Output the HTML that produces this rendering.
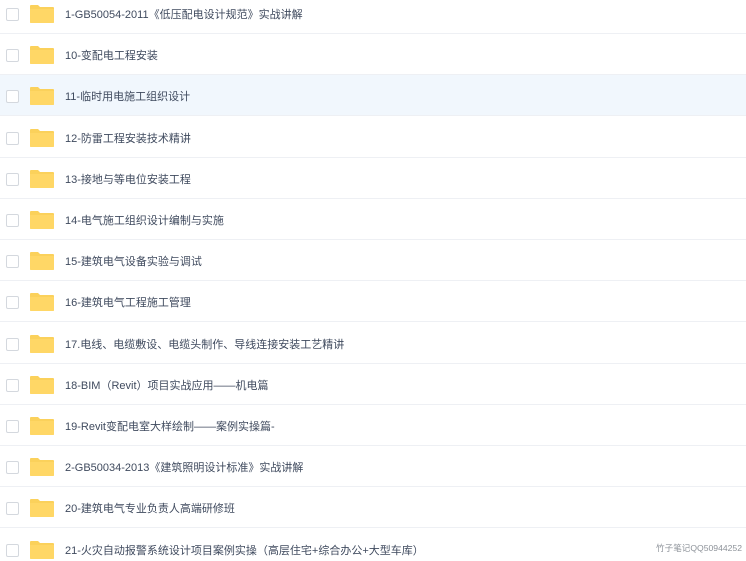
<!DOCTYPE html>
<html><head><meta charset="utf-8"><style>
html,body{margin:0;padding:0;width:746px;height:561px;overflow:hidden;background:#fff;}
body{position:relative;font-family:"Liberation Sans","Noto Sans CJK SC",sans-serif;}
.r{position:absolute;left:0;width:746px;height:41px;border-bottom:1px solid #eef0f4;box-sizing:border-box;}
.r.h{background:#f1f7fd;}
.cb{position:absolute;left:6px;top:15px;width:11px;height:11px;border:1px solid #d4d8de;border-radius:2px;background:#fff;}
.f{position:absolute;left:30px;top:11px;width:24px;height:19px;}
.t{position:absolute;left:65px;top:14px;font-size:11px;color:#3f4a5e;line-height:16px;white-space:nowrap;}
.wm{position:absolute;left:656px;top:542px;font-size:8.6px;color:#8d9299;white-space:nowrap;}
</style></head><body>
<div class="r" style="top:-7px"><div class="cb"></div><svg class="f" viewBox="0 0 24 19"><path d="M0 2a1 1 0 0 1 1-1h7l2 2h13a1 1 0 0 1 1 1v14a1 1 0 0 1-1 1H1a1 1 0 0 1-1-1z" fill="#fbd15b"/><path d="M0 5h24v13a1 1 0 0 1-1 1H1a1 1 0 0 1-1-1z" fill="#ffd766"/></svg><div class="t">1-GB50054-2011《低压配电设计规范》实战讲解</div></div>
<div class="r" style="top:34.2px"><div class="cb"></div><svg class="f" viewBox="0 0 24 19"><path d="M0 2a1 1 0 0 1 1-1h7l2 2h13a1 1 0 0 1 1 1v14a1 1 0 0 1-1 1H1a1 1 0 0 1-1-1z" fill="#fbd15b"/><path d="M0 5h24v13a1 1 0 0 1-1 1H1a1 1 0 0 1-1-1z" fill="#ffd766"/></svg><div class="t">10-变配电工程安装</div></div>
<div class="r h" style="top:75.4px"><div class="cb"></div><svg class="f" viewBox="0 0 24 19"><path d="M0 2a1 1 0 0 1 1-1h7l2 2h13a1 1 0 0 1 1 1v14a1 1 0 0 1-1 1H1a1 1 0 0 1-1-1z" fill="#fbd15b"/><path d="M0 5h24v13a1 1 0 0 1-1 1H1a1 1 0 0 1-1-1z" fill="#ffd766"/></svg><div class="t">11-临时用电施工组织设计</div></div>
<div class="r" style="top:116.6px"><div class="cb"></div><svg class="f" viewBox="0 0 24 19"><path d="M0 2a1 1 0 0 1 1-1h7l2 2h13a1 1 0 0 1 1 1v14a1 1 0 0 1-1 1H1a1 1 0 0 1-1-1z" fill="#fbd15b"/><path d="M0 5h24v13a1 1 0 0 1-1 1H1a1 1 0 0 1-1-1z" fill="#ffd766"/></svg><div class="t">12-防雷工程安装技术精讲</div></div>
<div class="r" style="top:157.8px"><div class="cb"></div><svg class="f" viewBox="0 0 24 19"><path d="M0 2a1 1 0 0 1 1-1h7l2 2h13a1 1 0 0 1 1 1v14a1 1 0 0 1-1 1H1a1 1 0 0 1-1-1z" fill="#fbd15b"/><path d="M0 5h24v13a1 1 0 0 1-1 1H1a1 1 0 0 1-1-1z" fill="#ffd766"/></svg><div class="t">13-接地与等电位安装工程</div></div>
<div class="r" style="top:199px"><div class="cb"></div><svg class="f" viewBox="0 0 24 19"><path d="M0 2a1 1 0 0 1 1-1h7l2 2h13a1 1 0 0 1 1 1v14a1 1 0 0 1-1 1H1a1 1 0 0 1-1-1z" fill="#fbd15b"/><path d="M0 5h24v13a1 1 0 0 1-1 1H1a1 1 0 0 1-1-1z" fill="#ffd766"/></svg><div class="t">14-电气施工组织设计编制与实施</div></div>
<div class="r" style="top:240.2px"><div class="cb"></div><svg class="f" viewBox="0 0 24 19"><path d="M0 2a1 1 0 0 1 1-1h7l2 2h13a1 1 0 0 1 1 1v14a1 1 0 0 1-1 1H1a1 1 0 0 1-1-1z" fill="#fbd15b"/><path d="M0 5h24v13a1 1 0 0 1-1 1H1a1 1 0 0 1-1-1z" fill="#ffd766"/></svg><div class="t">15-建筑电气设备实验与调试</div></div>
<div class="r" style="top:281.4px"><div class="cb"></div><svg class="f" viewBox="0 0 24 19"><path d="M0 2a1 1 0 0 1 1-1h7l2 2h13a1 1 0 0 1 1 1v14a1 1 0 0 1-1 1H1a1 1 0 0 1-1-1z" fill="#fbd15b"/><path d="M0 5h24v13a1 1 0 0 1-1 1H1a1 1 0 0 1-1-1z" fill="#ffd766"/></svg><div class="t">16-建筑电气工程施工管理</div></div>
<div class="r" style="top:322.6px"><div class="cb"></div><svg class="f" viewBox="0 0 24 19"><path d="M0 2a1 1 0 0 1 1-1h7l2 2h13a1 1 0 0 1 1 1v14a1 1 0 0 1-1 1H1a1 1 0 0 1-1-1z" fill="#fbd15b"/><path d="M0 5h24v13a1 1 0 0 1-1 1H1a1 1 0 0 1-1-1z" fill="#ffd766"/></svg><div class="t">17.电线、电缆敷设、电缆头制作、导线连接安装工艺精讲</div></div>
<div class="r" style="top:363.8px"><div class="cb"></div><svg class="f" viewBox="0 0 24 19"><path d="M0 2a1 1 0 0 1 1-1h7l2 2h13a1 1 0 0 1 1 1v14a1 1 0 0 1-1 1H1a1 1 0 0 1-1-1z" fill="#fbd15b"/><path d="M0 5h24v13a1 1 0 0 1-1 1H1a1 1 0 0 1-1-1z" fill="#ffd766"/></svg><div class="t">18-BIM（Revit）项目实战应用——机电篇</div></div>
<div class="r" style="top:405px"><div class="cb"></div><svg class="f" viewBox="0 0 24 19"><path d="M0 2a1 1 0 0 1 1-1h7l2 2h13a1 1 0 0 1 1 1v14a1 1 0 0 1-1 1H1a1 1 0 0 1-1-1z" fill="#fbd15b"/><path d="M0 5h24v13a1 1 0 0 1-1 1H1a1 1 0 0 1-1-1z" fill="#ffd766"/></svg><div class="t">19-Revit变配电室大样绘制——案例实操篇-</div></div>
<div class="r" style="top:446.2px"><div class="cb"></div><svg class="f" viewBox="0 0 24 19"><path d="M0 2a1 1 0 0 1 1-1h7l2 2h13a1 1 0 0 1 1 1v14a1 1 0 0 1-1 1H1a1 1 0 0 1-1-1z" fill="#fbd15b"/><path d="M0 5h24v13a1 1 0 0 1-1 1H1a1 1 0 0 1-1-1z" fill="#ffd766"/></svg><div class="t">2-GB50034-2013《建筑照明设计标准》实战讲解</div></div>
<div class="r" style="top:487.4px"><div class="cb"></div><svg class="f" viewBox="0 0 24 19"><path d="M0 2a1 1 0 0 1 1-1h7l2 2h13a1 1 0 0 1 1 1v14a1 1 0 0 1-1 1H1a1 1 0 0 1-1-1z" fill="#fbd15b"/><path d="M0 5h24v13a1 1 0 0 1-1 1H1a1 1 0 0 1-1-1z" fill="#ffd766"/></svg><div class="t">20-建筑电气专业负责人高端研修班</div></div>
<div class="r" style="top:528.6px"><div class="cb"></div><svg class="f" viewBox="0 0 24 19"><path d="M0 2a1 1 0 0 1 1-1h7l2 2h13a1 1 0 0 1 1 1v14a1 1 0 0 1-1 1H1a1 1 0 0 1-1-1z" fill="#fbd15b"/><path d="M0 5h24v13a1 1 0 0 1-1 1H1a1 1 0 0 1-1-1z" fill="#ffd766"/></svg><div class="t">21-火灾自动报警系统设计项目案例实操（高层住宅+综合办公+大型车库）</div></div>
<div class="wm">竹子笔记QQ50944252</div>
</body></html>
